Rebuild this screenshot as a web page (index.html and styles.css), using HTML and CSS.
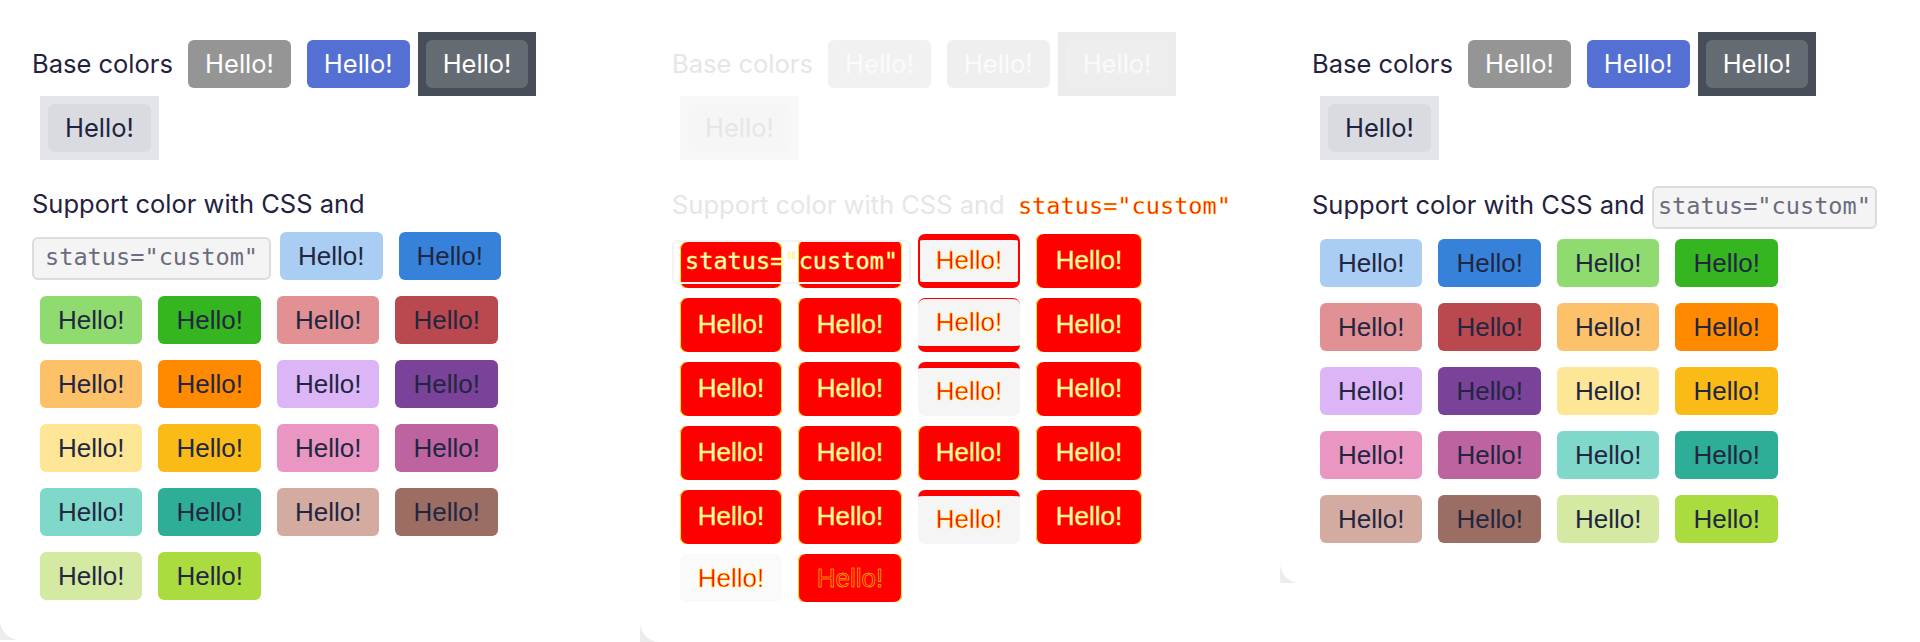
FILE: index.html
```html
<!DOCTYPE html>
<html lang="en">
<head>
<meta charset="utf-8">
<title>Badge colors diff</title>
<link rel="stylesheet" href="styles.css">
</head>
<body>
<div class="page">
  <section class="panel">
    <div class="card">
      <div class="base">Base colors <span class="btn b-gray">Hello!</span><span class="btn b-blue">Hello!</span><span class="wrap w-dark"><span class="btn b-dark">Hello!</span></span><span class="wrap w-light"><span class="btn b-light">Hello!</span></span></div>
      <p class="custom">Support color with CSS and<br><code class="code code-wide">status="custom"</code><span class="tag c1">Hello!</span><span class="tag c2">Hello!</span><span class="tag c3">Hello!</span><span class="tag c4">Hello!</span><span class="tag c5">Hello!</span><span class="tag c6">Hello!</span><span class="tag c7">Hello!</span><span class="tag c8">Hello!</span><span class="tag c9">Hello!</span><span class="tag c10">Hello!</span><span class="tag c11">Hello!</span><span class="tag c12">Hello!</span><span class="tag c13">Hello!</span><span class="tag c14">Hello!</span><span class="tag c15">Hello!</span><span class="tag c16">Hello!</span><span class="tag c17">Hello!</span><span class="tag c18">Hello!</span><span class="tag c19">Hello!</span><span class="tag c20">Hello!</span></p>
    </div>
  </section>

  <section class="panel">
    <div class="card card-diff">
      <div class="base faded">Base colors <span class="btn f-gray">Hello!</span><span class="btn f-blue">Hello!</span><span class="wrap fw-dark"><span class="btn f-dark">Hello!</span></span><span class="wrap fw-light"><span class="btn f-light">Hello!</span></span></div>
      <p class="custom faded">Support color with CSS and <code class="code code-narrow code-diff">status="custom"</code></p>
      <div class="diff-grid">
        <div class="d r1a"></div>
        <div class="d r1b"></div>
        <div class="d ring">Hello!</div>
        <div class="d">Hello!</div>
        <div class="d">Hello!</div>
        <div class="d">Hello!</div>
        <div class="d lt band-bottom">Hello!</div>
        <div class="d">Hello!</div>
        <div class="d">Hello!</div>
        <div class="d">Hello!</div>
        <div class="d lt band-top">Hello!</div>
        <div class="d">Hello!</div>
        <div class="d">Hello!</div>
        <div class="d">Hello!</div>
        <div class="d">Hello!</div>
        <div class="d">Hello!</div>
        <div class="d">Hello!</div>
        <div class="d">Hello!</div>
        <div class="d lt band-top">Hello!</div>
        <div class="d">Hello!</div>
        <div class="d lt pale">Hello!</div>
        <div class="d hollow">Hello!</div>
        <div class="code-ghost">status="custom"</div>
      </div>
    </div>
  </section>

  <section class="panel">
    <div class="card">
      <div class="base">Base colors <span class="btn b-gray">Hello!</span><span class="btn b-blue">Hello!</span><span class="wrap w-dark"><span class="btn b-dark">Hello!</span></span><span class="wrap w-light"><span class="btn b-light">Hello!</span></span></div>
      <p class="custom">Support color with CSS and <code class="code code-narrow">status="custom"</code><span class="tag c1">Hello!</span><span class="tag c2">Hello!</span><span class="tag c3">Hello!</span><span class="tag c4">Hello!</span><span class="tag c5">Hello!</span><span class="tag c6">Hello!</span><span class="tag c7">Hello!</span><span class="tag c8">Hello!</span><span class="tag c9">Hello!</span><span class="tag c10">Hello!</span><span class="tag c11">Hello!</span><span class="tag c12">Hello!</span><span class="tag c13">Hello!</span><span class="tag c14">Hello!</span><span class="tag c15">Hello!</span><span class="tag c16">Hello!</span><span class="tag c17">Hello!</span><span class="tag c18">Hello!</span><span class="tag c19">Hello!</span><span class="tag c20">Hello!</span></p>
    </div>
  </section>
</div>
</body>
</html>
```

FILE: styles.css
```css
* { box-sizing: border-box; }

body {
  margin: 0;
  background: #ffffff;
  font-family: Inter, "Noto Sans", sans-serif;
  color: #1f2340;
}

.page {
  display: flex;
  align-items: flex-start;
  width: 1920px;
}

.panel {
  width: 640px;
  background: #ececec;
}

.card {
  background: #ffffff;
  border-bottom-left-radius: 20px;
  padding: 32px;
  font-size: 25.5px;
  line-height: 40px;
}

.card-diff { padding-bottom: 40px; }

.base { margin: 0; }

.custom { margin: 24px 0 0; }

/* base buttons */
.btn {
  display: inline-block;
  margin: 8px;
  padding: 0 17px;
  height: 48px;
  line-height: 48px;
  border-radius: 6px;
  font-family: Inter, "Noto Sans", sans-serif;
  font-size: 25.5px;
  color: #ffffff;
}

.wrap { display: inline-block; }
.w-light, .fw-light { margin-left: 8px; }

.b-gray { background: #959595; }
.b-blue { background: #5470d2; }
.w-dark { background: #484e59; }
.b-dark { background: #656b72; }
.w-light { background: #e4e5e9; }
.b-light { background: #dadbe0; color: #1f2340; }

/* faded (diff background) */
.faded { color: #e6e6e6; }
.f-gray { background: #f1f1f1; color: #fbfbfb; }
.f-blue { background: #efefef; color: #fbfbfb; }
.fw-dark { background: #ececec; }
.f-dark { background: #eeeeee; color: #fafafa; }
.fw-light { background: #f8f8f8; }
.f-light { background: #f6f6f6; color: #e6e6e6; }

/* code chip */
.code {
  display: inline-block;
  margin: 2px 1px 2px 0;
  border: 2px solid #dcdcdc;
  border-radius: 6px;
  background: #f4f4f5;
  font-family: "DejaVu Sans Mono", "Liberation Mono", monospace;
  font-size: 23.6px;
  line-height: 27px;
  color: #6c6c7c;
}
.code-wide { padding: 5px 11px 7px; }
.code-narrow { padding: 5px 4px 7px; }
.code-diff {
  border-color: transparent;
  background: transparent;
  color: #ff1a00;
  -webkit-text-stroke: 0.3px #ffee00;
}

/* colored tags */
.tag {
  display: inline-block;
  margin: 8px;
  padding: 0 18px;
  height: 48px;
  line-height: 48px;
  border-radius: 6px;
  font-family: "Liberation Sans", Arial, sans-serif;
  font-size: 26px;
  color: #222641;
}
.c1 { background: #a9cdf3; }
.c2 { background: #3682da; }
.c3 { background: #8fdb70; }
.c4 { background: #35b520; }
.c5 { background: #e19094; }
.c6 { background: #b9494f; }
.c7 { background: #fcc169; }
.c8 { background: #ff8a00; }
.c9 { background: #dbb5f6; }
.c10 { background: #7a4299; }
.c11 { background: #fde695; }
.c12 { background: #fbbb17; }
.c13 { background: #e997c2; }
.c14 { background: #bd63a0; }
.c15 { background: #80d8cb; }
.c16 { background: #2ead97; }
.c17 { background: #d4aba0; }
.c18 { background: #9c6e63; }
.c19 { background: #d4e9a2; }
.c20 { background: #abdc3f; }

/* diff grid */
.diff-grid {
  position: relative;
  display: grid;
  grid-template-columns: 102px 104px 102px 106px;
  grid-template-rows: repeat(5, 54px) 48px;
  column-gap: 16px;
  row-gap: 10px;
  margin: 2.5px 0 0 8px;
}

.d {
  border-radius: 7px;
  background: #ff0000;
  box-shadow: inset 1px 0 0 #ffee00, inset -1px 0 0 #ffee00;
  font-family: "Liberation Sans", Arial, sans-serif;
  font-size: 26px;
  line-height: 52px;
  text-align: center;
  color: #fff6d8;
  -webkit-text-stroke: 0.5px #ffee00;
}

.r1a { margin-top: 8px; height: 46px; }
.r1b { margin-top: 6px; height: 48px; }

.ring {
  background: #f5f5f5;
  border: solid #ff0000;
  border-width: 6px 2px;
  line-height: 40px;
  color: #ff0000;
  box-shadow: none;
}

.lt {
  background: #f5f5f5;
  color: #ff0000;
  box-shadow: none;
}
.band-bottom {
  border-top: 1px solid #ff0000;
  border-bottom: 6px solid #ff0000;
  line-height: 46px;
}
.band-top {
  border-top: 6px solid #ff0000;
  line-height: 46px;
}
.pale { background: #fafafa; line-height: 48px; }
.hollow {
  color: #ff0000;
  line-height: 48px;
}

.code-ghost {
  position: absolute;
  left: -8px;
  top: 6px;
  width: 239px;
  height: 44px;
  padding: 5px 11px;
  border: 2px solid #f3f3f3;
  border-radius: 6px;
  font-family: "DejaVu Sans Mono", "Liberation Mono", monospace;
  font-size: 23.6px;
  line-height: 28px;
  color: #ffffff;
  -webkit-text-stroke: 0.5px #ffee00;
}
```
